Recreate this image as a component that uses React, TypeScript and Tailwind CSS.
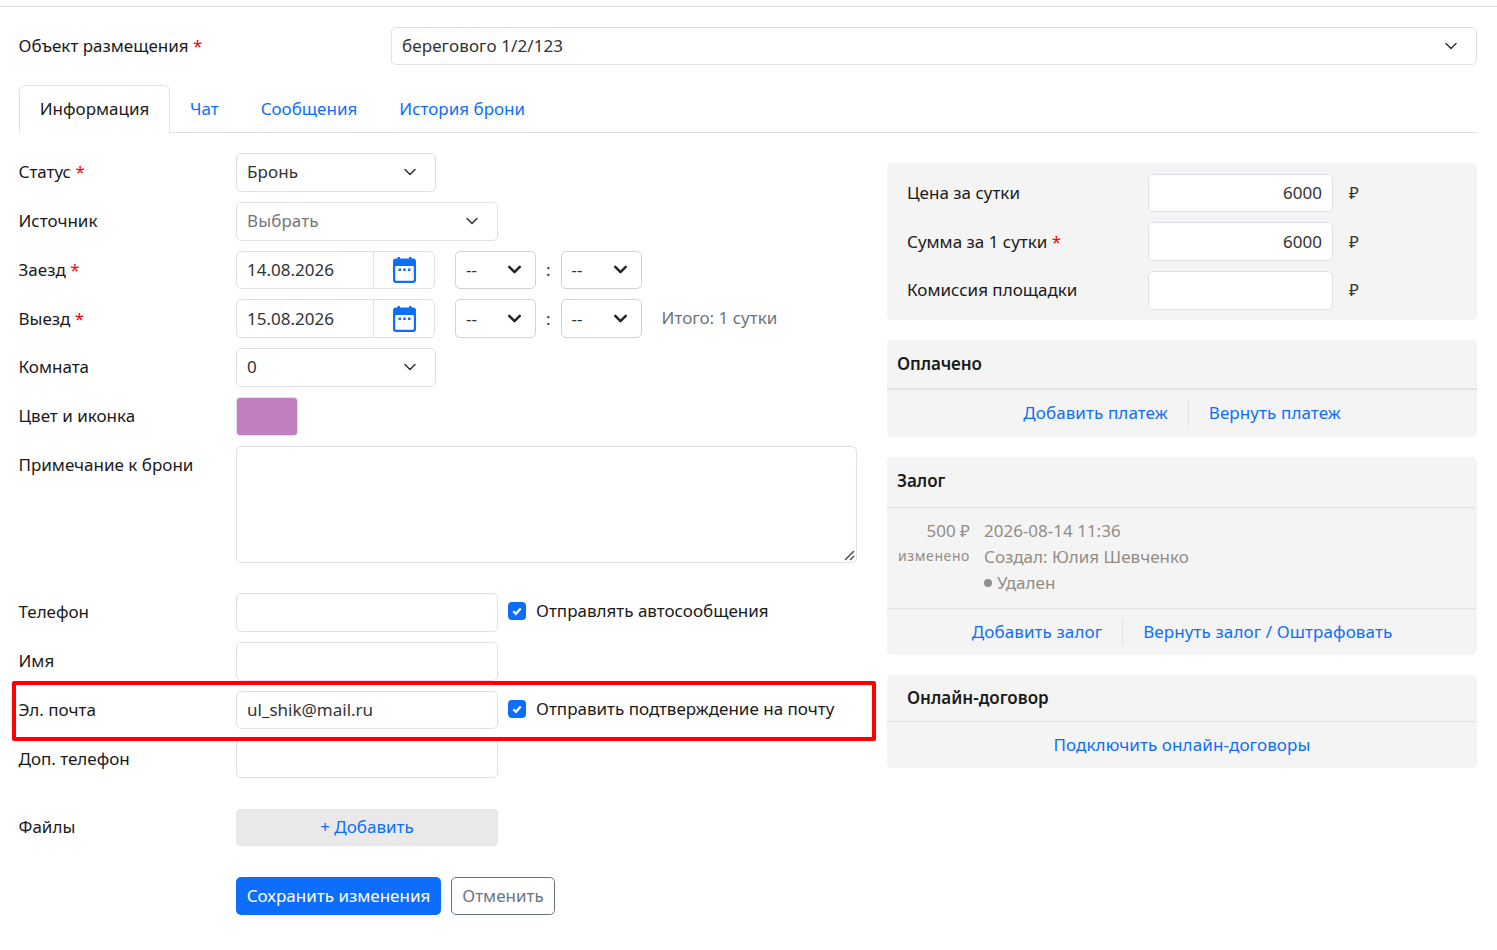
import { ChevronDown } from "lucide-react";
import type { ReactNode } from "react";

const Req = () => <span className="text-[#ff0000]"> *</span>;

function Row({ label, children, className = "h-[38.75px] mb-[10px]" }: { label: ReactNode; children?: ReactNode; className?: string }) {
  return (
    <div className={`flex ${className}`}>
      <div className="-ml-[0.5px] w-[217.5px] shrink-0 pt-[7.25px] text-[#1a1a1a]">{label}</div>
      {children}
    </div>
  );
}

function SelectBox({ value, className, muted }: { value: string; className: string; muted?: boolean }) {
  return (
    <div className={`flex h-full items-center justify-between rounded-[5px] border border-[#e0e1e8] bg-white pl-[10px] pr-[15px] ${muted ? "text-[#777]" : "text-[#333]"} ${className}`}>
      <span className="tracking-[0.1px]">{value}</span>
      <ChevronDown size={20} strokeWidth={1.8} className="text-[#333]" />
    </div>
  );
}

function CalendarIcon() {
  return (
    <svg width="23" height="26" viewBox="0 0 23 26" fill="none">
      <path d="M4.5 0h2.4v3H4.5zM16.1 0h2.4v3h-2.4z" fill="#0d6efd" />
      <rect x="0" y="1.5" width="23" height="24.5" rx="3" fill="#0d6efd" />
      <rect x="2.2" y="9" width="18.6" height="14.8" rx="1" fill="white" />
      <path d="M5.5 11.5h2.6v2.4H5.5zM10.2 11.5h2.6v2.4h-2.6zM14.9 11.5h2.6v2.4h-2.6z" fill="#0d6efd" />
    </svg>
  );
}

function DateField({ value }: { value: string }) {
  return (
    <div className="flex h-full w-[199px] rounded-[5px] border border-[#e0e1e8] bg-white text-[#333]">
      <div className="flex w-[137px] items-center border-r border-[#e0e1e8] pl-[10px]">{value}</div>
      <div className="flex flex-1 items-center justify-center"><CalendarIcon /></div>
    </div>
  );
}

function TimeBox() {
  return (
    <div className="flex h-full w-[81px] items-center justify-between rounded-[5px] border border-[#ced4da] bg-white pl-[10px] pr-[10px] text-[#333]">
      <span>--</span>
      <ChevronDown size={21} strokeWidth={2.8} className="text-[#222]" />
    </div>
  );
}

function TimePair() {
  return (
    <div className="ml-[20px] flex h-full items-center gap-[10px]">
      <TimeBox />
      <span className="text-[#333]">:</span>
      <TimeBox />
    </div>
  );
}

function Check({ label }: { label: string }) {
  return (
    <div className="ml-[10px] flex items-center gap-[10px] pb-[2px] text-[#1a1a1a]">
      <span className="flex h-[18px] w-[18px] items-center justify-center rounded-[4px] bg-[#0d6efd]">
        <svg width="12" height="12" viewBox="0 0 12 12" fill="none"><path d="M2.3 6.2l2.6 2.6 4.8-5.4" stroke="white" strokeWidth="2.2" /></svg>
      </span>
      {label}
    </div>
  );
}

function TextBox({ value }: { value?: string }) {
  return (
    <div className="flex h-full w-[262px] items-center rounded-[5px] border border-[#e0e1e8] bg-white pl-[10px] text-[#333]">{value}</div>
  );
}

function PriceRow({ label, value }: { label: ReactNode; value?: string }) {
  return (
    <div className="flex h-[38.75px] items-center">
      <div className="w-[241px] text-[#1a1a1a]">{label}</div>
      <div className="flex h-full w-[185px] items-center justify-end rounded-[5px] border border-[#e0e1e8] bg-white pr-[10px] text-[#333]">{value}</div>
      <span className="ml-[16px] text-[#333]">₽</span>
    </div>
  );
}

const Link2 = ({ children }: { children: ReactNode }) => <a className="text-[#0d6efd]">{children}</a>;

function App() {
  return (
    <div className="relative h-[950px] w-[1497px] overflow-hidden bg-white font-['Noto_Sans',sans-serif] text-[17px] leading-[24px]">
      <div className="mt-[6px] h-px bg-[#e3e4ea]" />
      <div className="pl-[19px] pr-[20px] pt-[20px]">
        <div className="flex h-[38px] items-center">
          <div className="-ml-[0.5px] w-[372.5px] text-[#1a1a1a]">Объект размещения<Req /></div>
          <SelectBox value="берегового 1/2/123" className="flex-1" />
        </div>

        <div className="mt-[20px] flex h-[48px] items-stretch border-b border-[#e0e1e8]">
          <div className="-mb-px flex w-[151px] items-center justify-center rounded-t-[6px] border border-b-0 border-[#e0e1e8] bg-white pb-[2px] text-[#1a1a1a]">Информация</div>
          <div className="flex items-center gap-[42px] pl-[20px] text-[#0d6efd]">
            <span>Чат</span>
            <span>Сообщения</span>
            <span>История брони</span>
          </div>
        </div>

        <div className="mt-[20px] flex gap-[30px]">
          <div className="w-[838px] shrink-0">
            <Row label={<>Статус<Req /></>}><SelectBox value="Бронь" className="w-[200px]" /></Row>
            <Row label="Источник"><SelectBox value="Выбрать" className="w-[262px]" muted /></Row>
            <Row label={<>Заезд<Req /></>}><DateField value="14.08.2026" /><TimePair /></Row>
            <Row label={<>Выезд<Req /></>}>
              <DateField value="15.08.2026" /><TimePair />
              <span className="ml-[20px] self-center pb-[2px] text-[#6c757d]">Итого: 1 сутки</span>
            </Row>
            <Row label="Комната"><SelectBox value="0" className="w-[200px]" /></Row>
            <Row label="Цвет и иконка"><div className="h-full w-[62px] rounded-[4px] border border-[#e0e1e8] bg-[#c080c0]" /></Row>
            <Row label="Примечание к брони" className="mb-[30px] h-[117.5px]">
              <div className="relative flex-1 rounded-[5px] border border-[#e0e1e8] bg-white">
                <svg className="absolute bottom-[1px] right-[1px]" width="11" height="11" viewBox="0 0 11 11"><path d="M10 1L1 10M10 6L6 10" stroke="#555" strokeWidth="1.6" /></svg>
              </div>
            </Row>
            <Row label="Телефон"><TextBox /><Check label="Отправлять автосообщения" /></Row>
            <Row label="Имя"><TextBox /></Row>
            <Row label="Эл. почта"><TextBox value="ul_shik@mail.ru" /><Check label="Отправить подтверждение на почту" /></Row>
            <Row label="Доп. телефон" className="mb-[31px] h-[38.75px]"><TextBox /></Row>
            <Row label={<span className="relative -top-px">Файлы</span>} className="mb-[31px] h-[37px]">
              <div className="flex h-full w-[262px] items-center justify-center rounded-[4px] border border-[#e6e6e6] bg-[#e9e9e9] pb-[2px] text-[#0d6efd]">+ Добавить</div>
            </Row>
            <div className="ml-[217px] flex h-[38px] gap-[10px]">
              <div className="flex w-[205px] items-center justify-center rounded-[5px] bg-[#0d6efd] text-white">Сохранить изменения</div>
              <div className="flex w-[104px] items-center justify-center rounded-[5px] border border-[#6c757d] text-[#6c757d]">Отменить</div>
            </div>
          </div>

          <div className="mt-[10px] flex-1">
            <div className="flex flex-col gap-[10px] rounded-[5px] bg-[#f4f4f4] px-[20px] pb-[10.25px] pt-[10.5px]">
              <PriceRow label="Цена за сутки" value="6000" />
              <PriceRow label={<>Сумма за 1 сутки<Req /></>} value="6000" />
              <PriceRow label="Комиссия площадки" />
            </div>

            <div className="mt-[20px] rounded-[5px] bg-[#f4f4f4]">
              <div className="flex h-[50px] items-center border-b-2 border-[#e3e3e3] pl-[10px] font-semibold tracking-[-0.1px] text-[#1a1a1a]">Оплачено</div>
              <div className="flex h-[47px] items-center justify-center pb-[2px]">
                <span className="border-r border-[#e0e0e0] pr-[20px] leading-[26px] tracking-[0.1px]"><Link2>Добавить платеж</Link2></span>
                <span className="pl-[20px] tracking-[0.1px]"><Link2>Вернуть платеж</Link2></span>
              </div>
            </div>

            <div className="mt-[20px] rounded-[5px] bg-[#f4f4f4]">
              <div className="flex h-[51px] items-center border-b border-[#e3e3e3] pb-[2px] pl-[10px] font-semibold text-[#1a1a1a]">Залог</div>
              <div className="flex h-[101px] border-b border-[#e3e3e3] pt-[10px] text-[#938d86]">
                <div className="w-[83px] text-right">
                  <div className="leading-[26px]">500 ₽</div>
                  <div className="-mt-[1px] text-[14px] leading-[26px] tracking-[0.6px]">изменено</div>
                </div>
                <div className="ml-[14px] leading-[26px]">
                  <div>2026-08-14 11:36</div>
                  <div>Создал: Юлия Шевченко</div>
                  <div className="flex items-center gap-[5px]"><span className="h-[8px] w-[8px] rounded-full bg-[#8f8f8f]" />Удален</div>
                </div>
              </div>
              <div className="flex h-[46px] items-center justify-center">
                <span className="border-r border-[#e0e0e0] pr-[20px] leading-[26px] tracking-[0.1px]"><Link2>Добавить залог</Link2></span>
                <span className="pl-[20px] tracking-[0.1px]"><Link2>Вернуть залог / Оштрафовать</Link2></span>
              </div>
            </div>

            <div className="mt-[20px] rounded-[5px] bg-[#f4f4f4]">
              <div className="flex h-[47px] items-center border-b border-[#e3e3e3] pl-[20px] font-semibold text-[#1a1a1a]">Онлайн-договор</div>
              <div className="flex h-[46px] items-center justify-center tracking-[0.1px]"><Link2>Подключить онлайн-договоры</Link2></div>
            </div>
          </div>
        </div>
      </div>

      <div className="absolute left-[12px] top-[681px] h-[60px] w-[864px] rounded-[2px] border-[4px] border-[#ff0000]" />
    </div>
  );
}

export default App;
